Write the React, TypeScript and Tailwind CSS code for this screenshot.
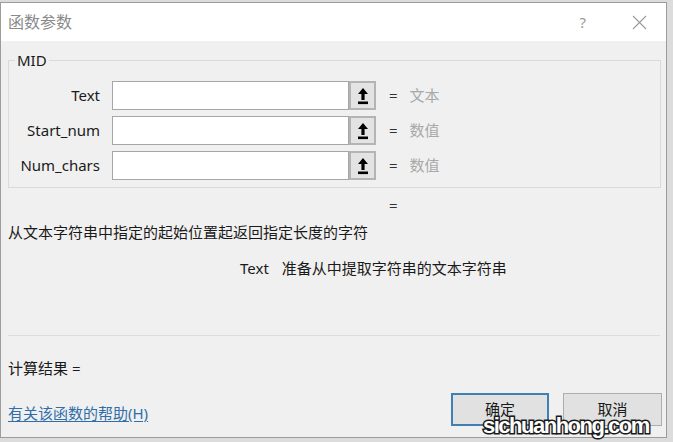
import React from "react";

const cjk = "font-['Segoe_UI','Noto_Sans','Noto_Sans_CJK_SC',sans-serif]";

function RefIcon() {
  return (
    <svg width="12" height="18" viewBox="0 0 12 18">
      <path d="M6 1 L11 7 L7.6 7 L7.6 13 L4.4 13 L4.4 7 L1 7 Z" fill="#000" />
      <rect x="1" y="14.5" width="10" height="2.6" fill="#000" />
    </svg>
  );
}

function Row({ label, hint }: { label: string; hint: string }) {
  return (
    <div className="flex items-center h-[29px]">
      <div className="w-[91px] text-right text-[15px] text-[#1a1a1a] pr-0">{label}</div>
      <div className="ml-[12px] w-[237px] h-[29px] bg-white border border-[#a6a6a6]" />
      <div className="w-[27px] h-[29px] bg-[#e3e3e3] border-2 border-[#b4b4b4] flex items-center justify-center">
        <RefIcon />
      </div>
      <div className="ml-[13px] text-[15px] text-[#333]">=</div>
      <div className="ml-[12px] text-[15px] text-[#a8a8a8]">{hint}</div>
    </div>
  );
}

export default function App() {
  return (
    <div className={`w-[673px] h-[442px] bg-[#dcdcdc] relative overflow-hidden ${cjk}`}>
      <div className="absolute left-0 top-[2px] w-[667px] h-[436px] border border-[#9c9c9c] bg-[#f0f0f0] flex flex-col">
        <div className="h-[38px] bg-white flex items-center shrink-0">
          <div className="ml-[7px] text-[16px] text-[#8a8a8a]">函数参数</div>
          <div className="ml-auto mr-[46px] text-[15px] text-[#9a9a9a]">?</div>
          <svg className="mr-[19px]" width="15" height="15" viewBox="0 0 15 15">
            <path d="M1 1 L14 14 M14 1 L1 14" stroke="#9a9a9a" strokeWidth="1.1" />
          </svg>
        </div>
        <div className="px-[7px] flex flex-col">
          <fieldset className="mt-[12px] border border-[#dadada] h-[135px] w-[653px]">
            <legend className="ml-[6px] px-[2px] text-[15px] leading-[15px] text-[#1a1a1a]">MID</legend>
            <div className="mt-[13px] flex flex-col gap-[6px]">
              <Row label="Text" hint="文本" />
              <Row label="Start_num" hint="数值" />
              <Row label="Num_chars" hint="数值" />
            </div>
          </fieldset>
          <div className="mt-[7px] ml-[381px] text-[15px] leading-[20px] text-[#333]">=</div>
          <div className="mt-[7px] text-[15px] leading-[20px] text-[#1a1a1a]">
            从文本字符串中指定的起始位置起返回指定长度的字符
          </div>
          <div className="mt-[16px] ml-[232px] flex text-[15px] leading-[20px] text-[#1a1a1a]">
            <span>Text</span>
            <span className="ml-[13px]">准备从中提取字符串的文本字符串</span>
          </div>
          <div className="mt-[57px] h-px bg-[#dcdcdc] w-[652px]" />
          <div className="mt-[22px] text-[15px] leading-[20px] text-[#1a1a1a]">计算结果 =</div>
          <div className="mt-[15px] flex items-center">
            <span className="text-[15px] leading-[20px] text-[#2f6ea8] underline underline-offset-2 mt-[6px]">
              有关该函数的帮助(H)
            </span>
            <div className="ml-auto flex gap-[14px] mr-[-3px]">
              <div className="w-[98px] h-[33px] border-2 border-[#3f7fb5] bg-[#e1e1e1] flex items-center justify-center text-[15px] text-[#1a1a1a]">
                确定
              </div>
              <div className="w-[99px] h-[33px] border border-[#adadad] bg-[#e1e1e1] flex items-center justify-center text-[15px] text-[#1a1a1a]">
                取消
              </div>
            </div>
          </div>
        </div>
      </div>
      <div className="absolute left-[483px] top-[413px] text-[22px] leading-[26px] font-bold text-white font-['Liberation_Sans',sans-serif] tracking-[-1.5px] [-webkit-text-stroke:3px_#1a1a1a] [paint-order:stroke_fill]">
        sichuanhong.com
      </div>
    </div>
  );
}
